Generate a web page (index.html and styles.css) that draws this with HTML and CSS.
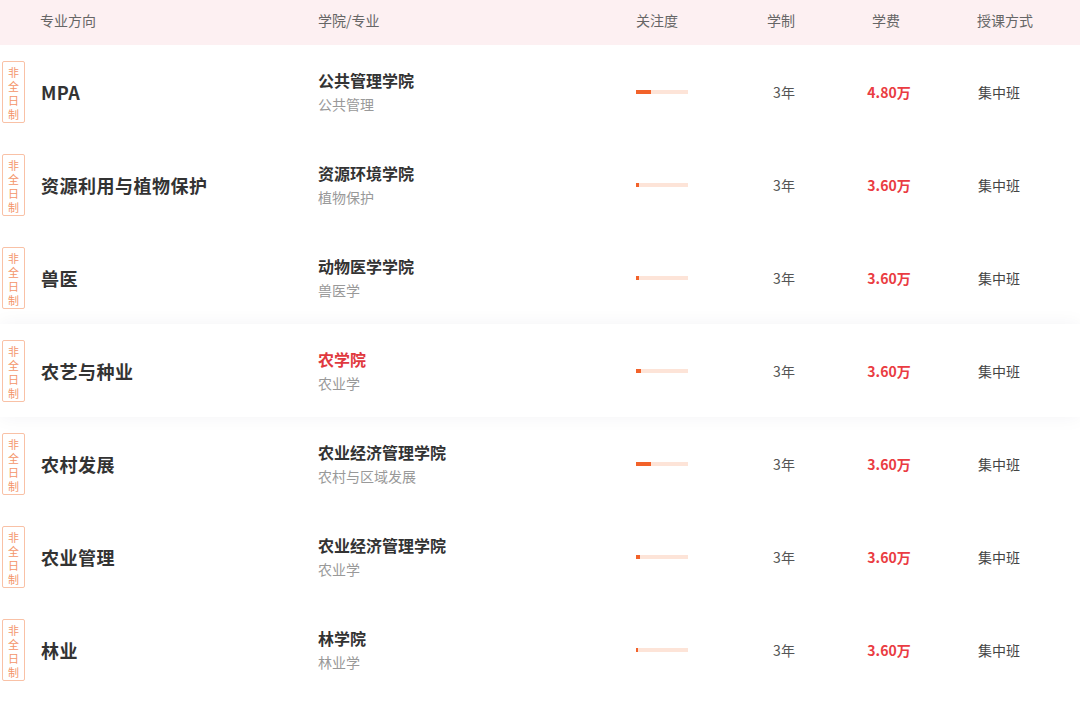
FILE: index.html
```html
<!DOCTYPE html>
<html lang="zh-CN">
<head>
<meta charset="utf-8">
<title>专业列表</title>
<link rel="stylesheet" href="styles.css">
</head>
<body>
<div class="table">
  <div class="row head">
    <div class="c-major">专业方向</div>
    <div class="c-college">学院/专业</div>
    <div class="c-focus">关注度</div>
    <div class="c-years">学制</div>
    <div class="c-fee">学费</div>
    <div class="c-mode">授课方式</div>
  </div>

  <div class="row item">
    <div class="c-major"><span class="badge">非全日制</span><span class="name">MPA</span></div>
    <div class="c-college"><div class="col-name">公共管理学院</div><div class="sub">公共管理</div></div>
    <div class="c-focus"><div class="bar"><div class="fill" style="width:28%"></div></div></div>
    <div class="c-years">3年</div>
    <div class="c-fee">4.80万</div>
    <div class="c-mode">集中班</div>
  </div>

  <div class="row item">
    <div class="c-major"><span class="badge">非全日制</span><span class="name">资源利用与植物保护</span></div>
    <div class="c-college"><div class="col-name">资源环境学院</div><div class="sub">植物保护</div></div>
    <div class="c-focus"><div class="bar"><div class="fill" style="width:6%"></div></div></div>
    <div class="c-years">3年</div>
    <div class="c-fee">3.60万</div>
    <div class="c-mode">集中班</div>
  </div>

  <div class="row item">
    <div class="c-major"><span class="badge">非全日制</span><span class="name">兽医</span></div>
    <div class="c-college"><div class="col-name">动物医学学院</div><div class="sub">兽医学</div></div>
    <div class="c-focus"><div class="bar"><div class="fill" style="width:6%"></div></div></div>
    <div class="c-years">3年</div>
    <div class="c-fee">3.60万</div>
    <div class="c-mode">集中班</div>
  </div>

  <div class="row item hover">
    <div class="c-major"><span class="badge">非全日制</span><span class="name">农艺与种业</span></div>
    <div class="c-college"><div class="col-name active">农学院</div><div class="sub">农业学</div></div>
    <div class="c-focus"><div class="bar"><div class="fill" style="width:9%"></div></div></div>
    <div class="c-years">3年</div>
    <div class="c-fee">3.60万</div>
    <div class="c-mode">集中班</div>
  </div>

  <div class="row item">
    <div class="c-major"><span class="badge">非全日制</span><span class="name">农村发展</span></div>
    <div class="c-college"><div class="col-name">农业经济管理学院</div><div class="sub">农村与区域发展</div></div>
    <div class="c-focus"><div class="bar"><div class="fill" style="width:29%"></div></div></div>
    <div class="c-years">3年</div>
    <div class="c-fee">3.60万</div>
    <div class="c-mode">集中班</div>
  </div>

  <div class="row item">
    <div class="c-major"><span class="badge">非全日制</span><span class="name">农业管理</span></div>
    <div class="c-college"><div class="col-name">农业经济管理学院</div><div class="sub">农业学</div></div>
    <div class="c-focus"><div class="bar"><div class="fill" style="width:8%"></div></div></div>
    <div class="c-years">3年</div>
    <div class="c-fee">3.60万</div>
    <div class="c-mode">集中班</div>
  </div>

  <div class="row item">
    <div class="c-major"><span class="badge">非全日制</span><span class="name">林业</span></div>
    <div class="c-college"><div class="col-name">林学院</div><div class="sub">林业学</div></div>
    <div class="c-focus"><div class="bar"><div class="fill" style="width:4%"></div></div></div>
    <div class="c-years">3年</div>
    <div class="c-fee">3.60万</div>
    <div class="c-mode">集中班</div>
  </div>
</div>
</body>
</html>
```

FILE: styles.css
```css
* { box-sizing: border-box; }
html, body {
  margin: 0;
  padding: 0;
  background: #fff;
  font-family: "Noto Sans CJK SC", "Noto Sans", sans-serif;
  color: #333;
}
.table {
  width: 1080px;
}
.row {
  display: grid;
  grid-template-columns: 318px 318px 100px 96px 114px 1fr;
  align-items: center;
}
.head {
  height: 45px;
  padding-bottom: 5px;
  background: #fdf0f2;
  font-size: 14px;
  color: #666;
}
.head .c-major { padding-left: 40px; }
.head .c-years, .head .c-fee { padding-right: 6px; }
.item {
  height: 93px;
  background: #fff;
  position: relative;
}
.item.hover {
  z-index: 1;
  box-shadow: 0 0 18px rgba(30, 40, 80, 0.05);
}
.c-major {
  display: flex;
  align-items: center;
}
.item .c-major { padding-left: 2px; }
.badge {
  width: 23px;
  height: 62px;
  border: 1px solid #f9c1a6;
  border-radius: 2px;
  color: #f4956a;
  font-size: 11px;
  line-height: 14px;
  text-align: center;
  padding: 3px 5px 0;
  word-break: break-all;
  display: flex;
  align-items: center;
  justify-content: center;
}
.name {
  margin-left: 16px;
  font-size: 18px;
  font-weight: 700;
  color: #333;
  letter-spacing: 0.5px;
}
.c-college { line-height: 24px; }
.col-name {
  font-size: 16px;
  font-weight: 700;
  color: #333;
}
.col-name.active { color: #e0393e; }
.sub {
  font-size: 14px;
  color: #999;
}
.bar {
  width: 52px;
  height: 4px;
  background: #fde4d8;
}
.fill {
  height: 4px;
  background: #f2622a;
}
.c-years, .c-fee { text-align: center; }
.item .c-years { font-size: 14px; color: #555; }
.item .c-fee { font-size: 14px; font-weight: 700; color: #ea3c42; }
.c-mode { padding-left: 31px; }
.item .c-mode { font-size: 14px; color: #444; padding-left: 32px; }
```
